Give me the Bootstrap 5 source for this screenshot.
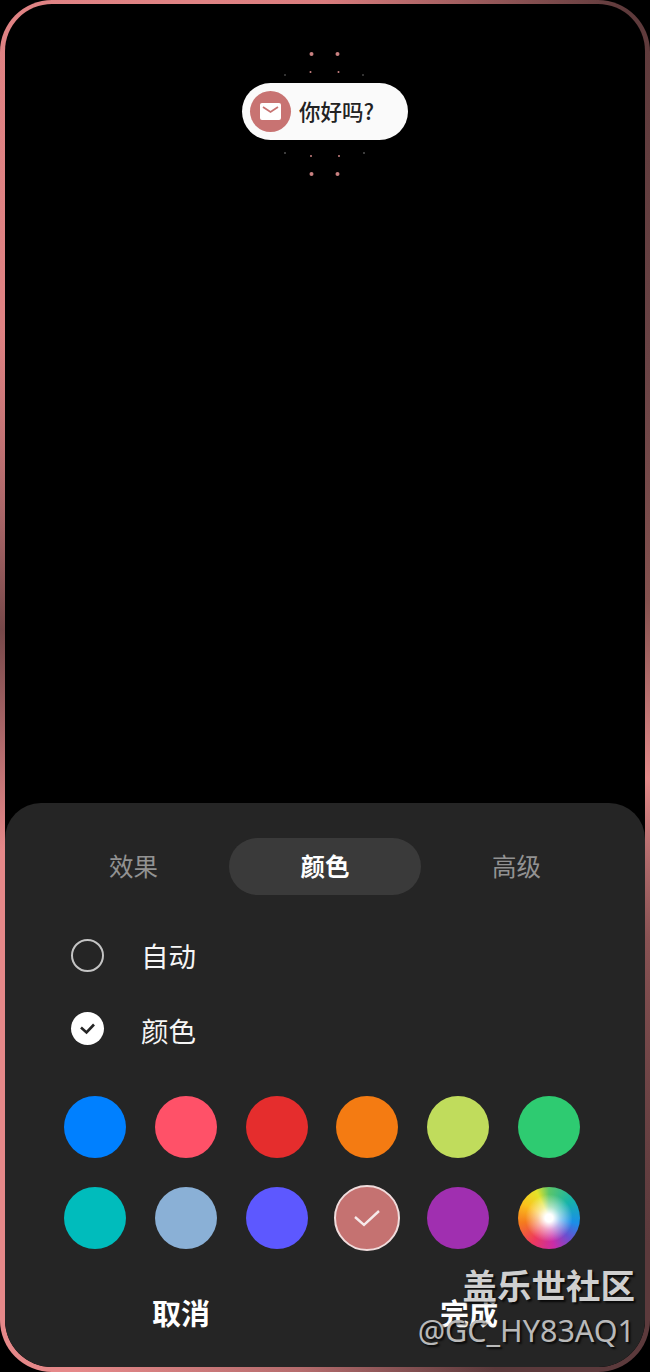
<!DOCTYPE html>
<html lang="zh-CN">
<head>
<meta charset="utf-8">
<title>边缘灯光</title>
<link href="https://cdn.jsdelivr.net/npm/bootstrap@5.3.0/dist/css/bootstrap.min.css" rel="stylesheet">
<style>
html,body{margin:0;background:#000;}
body{font-family:"Noto Sans CJK SC","Noto Sans",sans-serif;width:650px;height:1372px;overflow:hidden;}
.phone{position:relative;width:650px;height:1372px;padding:4px 5px 5px 5px;border-radius:52px;
 background:conic-gradient(from 0deg at 50% 50%,#d97c7d 0deg,#a86263 10deg,#5e3a3b 24deg,#6a4345 45deg,#85524f 75deg,#e58a8b 106deg,#8a5354 128deg,#5c3a3c 150deg,#5c3a3c 166deg,#b56c6d 182deg,#e58889 200deg,#e58889 243deg,#a96668 262deg,#764849 280deg,#a96668 298deg,#df8283 318deg,#e08384 350deg,#d97c7d 360deg);}
.screen{height:100%;background:#000;border-radius:47px;overflow:hidden;}
.stage{position:relative;height:799px;}
.toast-pill{position:absolute;left:237px;top:79px;width:166px;height:57px;background:#fafafa;border-radius:29px;padding-left:8px;gap:8px;}
.toast-ico{width:41px;height:41px;background:#c87372;border-radius:50%;flex:none;}
.toast-txt{font-size:21.5px;font-weight:500;color:#222;line-height:1;margin-top:-2px;}
.sparks{position:absolute;left:0;top:0;width:640px;height:200px;}
.sheet{height:564px;background:#252525;border-radius:36px 36px 43px 43px;padding-top:35px;}
.tabs-bar{justify-content:center;}
.tabs-bar .nav-link{width:191.5px;height:57px;padding:0;line-height:56px;text-align:center;font-size:24.5px;color:#929292;border-radius:29px;}
.tabs-bar .nav-link.active{background:#3a3a3a;color:#fff;font-weight:700;}
.modes{margin-top:41px;padding-left:66px;gap:34px;}
.mode-row{height:40px;gap:37px;color:#f5f5f5;font-size:27.5px;line-height:40px;}
.mode-label{margin-top:-3px;}
.mode-label-low{margin-top:-1px;}
.tick{width:33px;height:33px;border-radius:50%;flex:none;}
.tick-off{border:2px solid #c4c4c4;margin-top:-1px;}
.tick-on{background:#fff;margin-top:-3px;}
.swatches{display:grid;grid-template-columns:repeat(6,62px);column-gap:28.75px;row-gap:29px;margin-top:46px;padding-left:59px;}
.dot-c{width:62px;height:62px;border-radius:50%;}
.dot-sel{width:66px;height:66px;margin:-2px;border:2px solid #f0dcdc;background:#c57271;}
.dot-wheel{background:radial-gradient(circle at 50% 50%,#fff 0,#fff 9%,rgba(255,255,255,.55) 26%,rgba(255,255,255,0) 54%),conic-gradient(#5cc66a 0deg,#16b4a8 50deg,#1a8fe8 100deg,#6a4fd0 135deg,#c92ca8 170deg,#ee3a5c 215deg,#f57a1e 260deg,#fbc31c 300deg,#e4e32a 335deg,#5cc66a 360deg);}
.actions{margin-top:38px;padding-left:76px;gap:88px;}
.actions .btn{width:200px;height:50px;padding:0;line-height:50px;border:0;color:#fff;font-size:29px;font-weight:700;}
.wm{position:absolute;right:15px;text-shadow:2px 2px 2px rgba(0,0,0,.75);white-space:nowrap;line-height:1;}
.wm-a{top:1267px;font-size:34.5px;font-weight:700;color:#cfcfcf;}
.wm-b{top:1315px;font-size:30.5px;color:#b9b9b9;font-family:"Noto Sans","Noto Sans CJK SC",sans-serif;}
</style>
</head>
<body>
<div class="phone">
 <div class="screen d-flex flex-column">
  <div class="stage">
   <svg class="sparks" viewBox="0 0 640 200" aria-hidden="true">
    <g fill="#c98080">
     <circle cx="306.5" cy="50" r="2"/><circle cx="332.5" cy="50" r="2"/>
     <circle cx="306.5" cy="170" r="2"/><circle cx="332.5" cy="170" r="2"/>
     <circle cx="305.5" cy="68" r="1"/><circle cx="333.5" cy="68" r="1"/>
     <circle cx="306" cy="152" r="1"/><circle cx="334" cy="152" r="1"/>
    </g>
    <g fill="#8a8a8a">
     <circle cx="280" cy="71" r=".7"/><circle cx="358" cy="71" r=".7"/>
     <circle cx="280" cy="149" r=".8"/><circle cx="359" cy="149" r=".8"/>
    </g>
   </svg>
   <div class="toast-pill d-flex align-items-center">
    <span class="toast-ico d-flex align-items-center justify-content-center">
     <svg width="21" height="17" viewBox="0 0 21 17" aria-hidden="true"><rect width="21" height="17" rx="2" fill="#fff"/><path d="M3 4l7.5 5L18 4" fill="none" stroke="#c87372" stroke-width="1.8"/></svg>
    </span>
    <span class="toast-txt">你好吗?</span>
   </div>
  </div>
  <div class="sheet">
   <nav class="nav nav-pills tabs-bar">
    <a class="nav-link" href="#">效果</a>
    <a class="nav-link active" href="#">颜色</a>
    <a class="nav-link" href="#">高级</a>
   </nav>
   <div class="modes d-flex flex-column">
    <div class="mode-row d-flex align-items-center"><span class="tick tick-off"></span><span class="mode-label">自动</span></div>
    <div class="mode-row d-flex align-items-center"><span class="tick tick-on d-flex align-items-center justify-content-center">
     <svg width="17" height="13" viewBox="0 0 17 13" aria-hidden="true"><path d="M2 5.5l5.5 5L15 2.5" fill="none" stroke="#252525" stroke-width="2.6"/></svg></span><span class="mode-label-low">颜色</span></div>
   </div>
   <div class="swatches">
    <div class="dot-c" style="background:#0080ff"></div>
    <div class="dot-c" style="background:#ff5168"></div>
    <div class="dot-c" style="background:#e52d2d"></div>
    <div class="dot-c" style="background:#f47b12"></div>
    <div class="dot-c" style="background:#c0dc5c"></div>
    <div class="dot-c" style="background:#2ecb71"></div>
    <div class="dot-c" style="background:#00bcbc"></div>
    <div class="dot-c" style="background:#8ab0d6"></div>
    <div class="dot-c" style="background:#5d58ff"></div>
    <div class="dot-c dot-sel d-flex align-items-center justify-content-center">
     <svg width="28" height="20" viewBox="0 0 28 20" aria-hidden="true"><path d="M2 9l9 8L26 3" fill="none" stroke="#f6eaea" stroke-width="2.4"/></svg></div>
    <div class="dot-c" style="background:#a02fb0"></div>
    <div class="dot-c dot-wheel"></div>
   </div>
   <div class="actions d-flex">
    <button type="button" class="btn">取消</button>
    <button type="button" class="btn">完成</button>
   </div>
  </div>
 </div>
 <div class="wm wm-a">盖乐世社区</div>
 <div class="wm wm-b">@GC_HY83AQ1</div>
</div>
<script src="https://cdn.jsdelivr.net/npm/bootstrap@5.3.0/dist/js/bootstrap.bundle.min.js"></script>
</body>
</html>
